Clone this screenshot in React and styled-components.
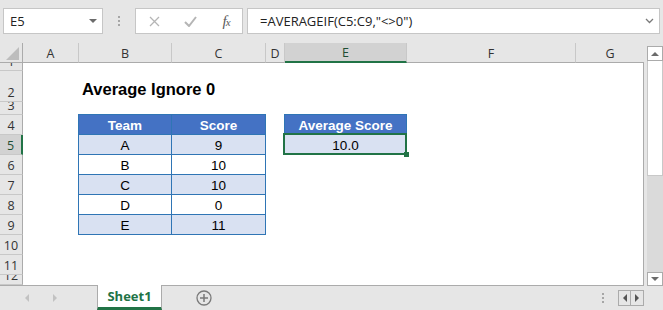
import styled, { createGlobalStyle, css } from "styled-components";

const GREEN = "#217346";
const LINE = "#ababab";
const SOFT_LINE = "#c8c8c8";
const TABLE_LINE = "#2f75b5";
const HEAD_BLUE = "#4472c4";
const BAND = "#d9e1f2";
const CHROME = "#e6e6e6";

const COLS = [
  { id: "A", w: 56 },
  { id: "B", w: 93 },
  { id: "C", w: 94 },
  { id: "D", w: 19 },
  { id: "E", w: 122 },
  { id: "F", w: 169 },
  { id: "G", w: 68 },
];

const head = (v, edge) => ({ v, kind: "head", edge });
const body = (v, band, edge) => ({ v, kind: "body", band, edge });

const teams = [
  ["A", 9],
  ["B", 10],
  ["C", 10],
  ["D", 0],
  ["E", 11],
];

const ROWS = [
  { n: 1, h: 8 },
  { n: 2, h: 31, cells: { B: { v: "Average Ignore 0", kind: "title" } } },
  { n: 3, h: 13 },
  {
    n: 4,
    h: 20,
    cells: {
      B: head("Team", "tl"),
      C: head("Score", "t"),
      E: head("Average Score", "tl"),
    },
  },
  ...teams.map(([t, s], i) => ({
    n: 5 + i,
    h: 20,
    active: i === 0,
    cells: {
      B: body(t, i % 2 === 0, "l"),
      C: body(String(s), i % 2 === 0, ""),
      ...(i === 0 ? { E: { ...body("10.0", true, "l"), selected: true } } : {}),
    },
  })),
  { n: 10, h: 20 },
  { n: 11, h: 20 },
  { n: 12, h: 10 },
];

const GlobalStyle = createGlobalStyle`
  * { box-sizing: border-box; }
  html, body { margin: 0; padding: 0; background: ${CHROME}; }
  body { font-family: "Open Sans", "Liberation Sans", sans-serif; }
`;

const Window = styled.div`
  width: 663px;
  height: 310px;
  display: flex;
  flex-direction: column;
  background: ${CHROME};
  overflow: hidden;
`;

/* ---------- formula bar ---------- */

const FormulaBar = styled.div`
  height: 43px;
  flex-shrink: 0;
  display: flex;
  align-items: flex-start;
  padding: 8px 3px 0 3px;
`;

const NameBox = styled.div`
  width: 100px;
  height: 26px;
  background: #fff;
  border: 1px solid #c6c6c6;
  display: flex;
  align-items: center;
  justify-content: space-between;
  padding: 0 5px 0 6px;
  font-size: 13px;
  color: #222;
`;

const Grip = styled.div`
  width: 2px;
  height: 26px;
  margin: 0 15px 0 15px;
  display: flex;
  flex-direction: column;
  justify-content: center;
  gap: 2px;

  span {
    width: 2px;
    height: 2px;
    background: #a6a6a6;
  }
`;

const FxGroup = styled.div`
  width: 108px;
  height: 26px;
  background: #fff;
  border: 1px solid #c6c6c6;
  display: grid;
  grid-template-columns: 36px 36px 36px;
  align-items: center;
  justify-items: center;
`;

const FxLabel = styled.span`
  font-family: "Liberation Serif", serif;
  font-style: italic;
  font-size: 15px;
  color: #5a5a5a;
  letter-spacing: -1px;

  small {
    font-size: 11px;
  }
`;

const FormulaInput = styled.div`
  flex: 1;
  height: 26px;
  margin-left: 4px;
  background: #fff;
  border: 1px solid #c6c6c6;
  display: flex;
  align-items: center;
  justify-content: space-between;
  padding: 0 5px 0 12px;
  font-size: 13px;
  color: #222;
`;

/* ---------- grid ---------- */

const SheetArea = styled.div`
  display: flex;
  height: 243px;
  flex-shrink: 0;
`;

const Grid = styled.div`
  width: 644px;
  display: flex;
  flex-direction: column;
`;

const HeaderRow = styled.div`
  display: flex;
  height: 20px;
`;

const Corner = styled.div`
  width: 23px;
  height: 20px;
  border-right: 1px solid ${LINE};
  border-bottom: 1px solid ${LINE};
  display: flex;
  align-items: flex-end;
  justify-content: flex-end;
  padding: 0 3px 2px 0;
`;

const ColHead = styled.div`
  width: ${(p) => p.$w}px;
  flex-shrink: 0;
  display: flex;
  align-items: center;
  justify-content: center;
  padding-top: 1px;
  font-size: 12.5px;
  color: #333;
  border-right: 1px solid ${SOFT_LINE};
  border-bottom: 1px solid ${LINE};
  ${(p) =>
    p.$active &&
    css`
      background: #d2d2d2;
      color: #1e4e33;
      border-bottom: 2px solid ${GREEN};
    `}
  ${(p) =>
    p.$last &&
    css`
      border-right: none;
    `}
`;

const Body = styled.div`
  height: 223px;
  background: #fff;
  border-right: 1px solid ${LINE};
  border-bottom: 1px solid ${LINE};
  overflow: hidden;
`;

const Row = styled.div`
  display: flex;
  height: ${(p) => p.$h}px;
`;

const RowHead = styled.div`
  width: 23px;
  flex-shrink: 0;
  background: ${CHROME};
  border-right: 1px solid ${LINE};
  border-bottom: 1px solid ${SOFT_LINE};
  display: flex;
  align-items: flex-end;
  justify-content: center;
  overflow: hidden;
  font-size: 12.5px;
  line-height: 17px;
  color: #333;
  ${(p) =>
    p.$active &&
    css`
      background: #d2d2d2;
      color: #1e4e33;
      border-right: 2px solid ${GREEN};
    `}
`;

const edgeShadow = (edge, color) => {
  const parts = [];
  if (edge.includes("l")) parts.push(`-1px 0 0 ${color}`);
  if (edge.includes("t")) parts.push(`0 -1px 0 ${color}`);
  if (edge.includes("l") && edge.includes("t")) parts.push(`-1px -1px 0 ${color}`);
  return parts.length ? `box-shadow: ${parts.join(", ")};` : "";
};

const Cell = styled.div`
  position: relative;
  width: ${(p) => p.$w}px;
  flex-shrink: 0;
  display: flex;
  align-items: center;
  justify-content: center;
  white-space: nowrap;
  font-family: "Liberation Sans", Arial, sans-serif;
  font-size: 13.5px;
  color: #000;

  ${(p) =>
    p.$kind === "title" &&
    css`
      justify-content: flex-start;
      align-items: flex-end;
      padding: 0 0 3px 3px;
      font-size: 16.5px;
      font-weight: bold;
    `}

  ${(p) =>
    (p.$kind === "head" || p.$kind === "body") &&
    css`
      padding-top: 1px;
      border-right: 1px solid ${TABLE_LINE};
      border-bottom: 1px solid ${TABLE_LINE};
      ${edgeShadow(p.$edge || "", TABLE_LINE)}
    `}

  ${(p) =>
    p.$kind === "head" &&
    css`
      background: ${HEAD_BLUE};
      color: #fff;
      font-weight: bold;
    `}

  ${(p) =>
    p.$kind === "body" &&
    css`
      background: ${p.$band ? BAND : "#fff"};
    `}
`;

const Selection = styled.div`
  position: absolute;
  top: -2px;
  left: -2px;
  right: -1px;
  bottom: -1px;
  border: 2px solid ${GREEN};
  z-index: 2;
`;

const FillHandle = styled.div`
  position: absolute;
  right: -3px;
  bottom: -3px;
  width: 5px;
  height: 5px;
  background: ${GREEN};
  z-index: 3;
`;

/* ---------- vertical scrollbar ---------- */

const VScroll = styled.div`
  width: 16px;
  margin: 3px 0 0 3px;
  display: flex;
  flex-direction: column;
`;

const ScrollBtn = styled.div`
  height: ${(p) => p.$h}px;
  background: #fff;
  border: 1px solid ${LINE};
  display: flex;
  align-items: center;
  justify-content: center;
  flex-shrink: 0;
`;

const Thumb = styled.div`
  height: 115px;
  background: #fff;
  border: 1px solid ${SOFT_LINE};
  border-top: none;
  flex-shrink: 0;
`;

const Track = styled.div`
  flex: 1;
  background: #dadada;
`;

/* ---------- sheet tabs ---------- */

const TabBar = styled.div`
  flex: 1;
  display: flex;
  align-items: stretch;
`;

const TabNav = styled.div`
  width: 97px;
  display: flex;
  align-items: center;
  padding-left: 25px;
  gap: 24px;
`;

const SheetTab = styled.div`
  position: relative;
  width: 65px;
  margin-top: -1px;
  background: #fff;
  border-left: 1px solid ${LINE};
  border-right: 1px solid ${LINE};
  border-bottom: 3px solid ${GREEN};
  display: flex;
  align-items: center;
  justify-content: center;
  font-size: 13px;
  font-weight: 700;
  color: ${GREEN};
`;

const AddSheet = styled.div`
  margin-left: 34px;
  display: flex;
  align-items: center;
`;

const TabRight = styled.div`
  margin-left: auto;
  margin-right: 19px;
  display: flex;
  align-items: center;
`;

const Dots = styled(Grip)`
  height: 14px;
  margin: 0 14px 0 0;
`;

const NavBox = styled.div`
  width: 13px;
  height: 16px;
  border: 1px solid ${LINE};
  background: ${CHROME};
  display: flex;
  align-items: center;
  justify-content: center;
  & + & {
    border-left: none;
  }
`;

const Tri = ({ dir, color, size = 4 }) => {
  const s = size;
  const pts = {
    up: `0,${s} ${s},0 ${2 * s},${s}`,
    down: `0,0 ${2 * s},0 ${s},${s}`,
    left: `${s},0 ${s},${2 * s} 0,${s}`,
    right: `0,0 0,${2 * s} ${s},${s}`,
  }[dir];
  const vertical = dir === "up" || dir === "down";
  return (
    <svg width={vertical ? 2 * s : s} height={vertical ? s : 2 * s}>
      <polygon points={pts} fill={color} />
    </svg>
  );
};

const ThreeDots = ({ as: Comp = Grip }) => (
  <Comp>
    <span />
    <span />
    <span />
  </Comp>
);

export default function App() {
  return (
    <>
      <GlobalStyle />
      <Window>
        <FormulaBar>
          <NameBox>
            E5
            <Tri dir="down" color="#6b6b6b" size={4} />
          </NameBox>
          <ThreeDots />
          <FxGroup>
            <svg width="11" height="11" viewBox="0 0 11 11">
              <path d="M1 1 L10 10 M10 1 L1 10" stroke="#b5b5b5" strokeWidth="1.3" fill="none" />
            </svg>
            <svg width="13" height="11" viewBox="0 0 13 11">
              <path d="M1 6 L5 10 L12 1" stroke="#b5b5b5" strokeWidth="2" fill="none" />
            </svg>
            <FxLabel>
              f<small>x</small>
            </FxLabel>
          </FxGroup>
          <FormulaInput>
            =AVERAGEIF(C5:C9,"&lt;&gt;0")
            <svg width="9" height="6" viewBox="0 0 9 6">
              <path d="M1 1 L4.5 4.5 L8 1" stroke="#7a7a7a" strokeWidth="1.3" fill="none" />
            </svg>
          </FormulaInput>
        </FormulaBar>

        <SheetArea>
          <Grid>
            <HeaderRow>
              <Corner>
                <svg width="13" height="13" viewBox="0 0 13 13">
                  <polygon points="13,0 13,13 0,13" fill="#bdbdbd" />
                </svg>
              </Corner>
              {COLS.map((c, i) => (
                <ColHead
                  key={c.id}
                  $w={c.w}
                  $active={c.id === "E"}
                  $last={i === COLS.length - 1}
                >
                  {c.id}
                </ColHead>
              ))}
            </HeaderRow>
            <Body>
              {ROWS.map((r) => (
                <Row key={r.n} $h={r.h}>
                  <RowHead $active={r.active}>{r.n}</RowHead>
                  {COLS.map((c) => {
                    const cell = r.cells && r.cells[c.id];
                    return (
                      <Cell
                        key={c.id}
                        $w={c.w}
                        $kind={cell && cell.kind}
                        $edge={cell && cell.edge}
                        $band={cell && cell.band}
                      >
                        {cell && cell.v}
                        {cell && cell.selected && (
                          <>
                            <Selection />
                            <FillHandle />
                          </>
                        )}
                      </Cell>
                    );
                  })}
                </Row>
              ))}
            </Body>
          </Grid>
          <VScroll>
            <ScrollBtn $h={15}>
              <Tri dir="up" color="#6b6b6b" size={4} />
            </ScrollBtn>
            <Thumb />
            <Track />
            <ScrollBtn $h={14}>
              <Tri dir="down" color="#6b6b6b" size={4} />
            </ScrollBtn>
          </VScroll>
        </SheetArea>

        <TabBar>
          <TabNav>
            <Tri dir="left" color="#c2c2c2" size={4} />
            <Tri dir="right" color="#c2c2c2" size={4} />
          </TabNav>
          <SheetTab>Sheet1</SheetTab>
          <AddSheet>
            <svg width="16" height="16" viewBox="0 0 16 16">
              <circle cx="8" cy="8" r="7" stroke="#7a7a7a" strokeWidth="1.3" fill="none" />
              <path d="M8 4 V12 M4 8 H12" stroke="#7a7a7a" strokeWidth="1.5" />
            </svg>
          </AddSheet>
          <TabRight>
            <ThreeDots as={Dots} />
            <NavBox>
              <Tri dir="left" color="#555" size={4} />
            </NavBox>
            <NavBox>
              <Tri dir="right" color="#555" size={4} />
            </NavBox>
          </TabRight>
        </TabBar>
      </Window>
    </>
  );
}
